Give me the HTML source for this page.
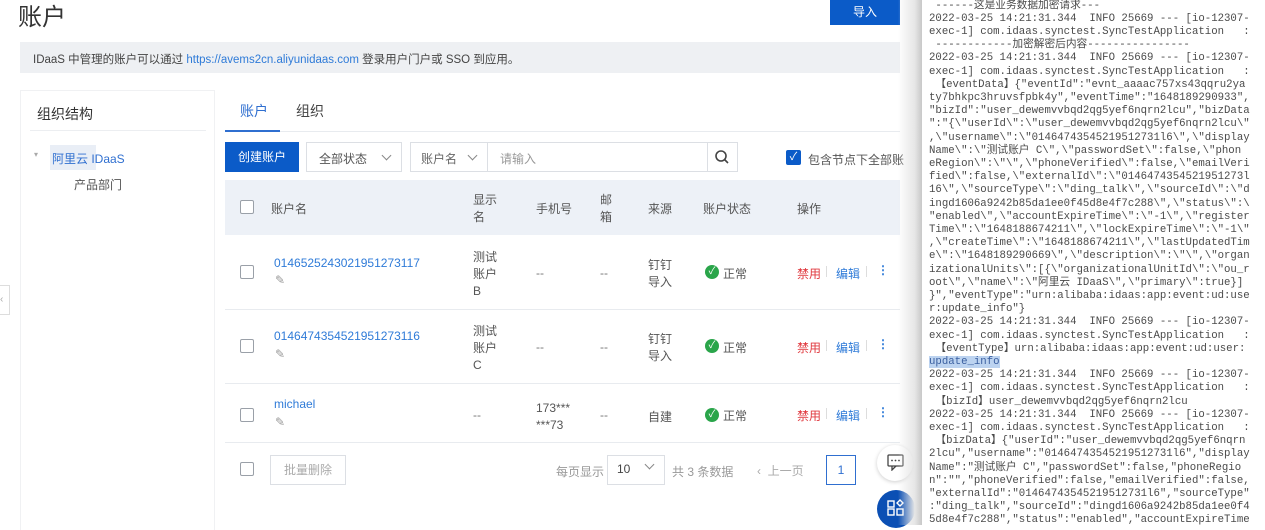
<!DOCTYPE html>
<html><head><meta charset="utf-8"><style>
*{box-sizing:border-box;margin:0;padding:0}
body{width:1265px;height:525px;overflow:hidden;background:#fff;position:relative;font-family:"Liberation Sans","Noto Sans CJK SC",sans-serif;color:#333;font-size:12px}
.a{position:absolute;white-space:nowrap}
.blue{color:#2f7bd8}
.cb{position:absolute;width:14px;height:14px;border:1px solid #9aa0a8;border-radius:2px;background:#fff}
.sel{position:absolute;border:1px solid #dcdfe4;background:#fff;height:30px}
.chev{position:absolute;width:7px;height:7px;border-right:1px solid #888;border-bottom:1px solid #888;transform:rotate(45deg)}
.hl{position:absolute;left:225px;width:675px;height:1px;background:#e8ebef}
.ok{position:absolute;width:14px;height:14px;border-radius:50%;background:#2aa54a;color:#fff;font-size:10px;line-height:14px;text-align:center}
#con{position:absolute;left:922px;top:0;width:343px;height:525px;background:#fff;font-family:"Liberation Mono","Noto Sans CJK SC",monospace;font-size:10.7px;line-height:13.2px;color:#4a4a4a;padding:0 0 0 7px;white-space:pre;top:-0.5px}
.hi{background:#bcd3f0;color:#3a5fa0}
</style></head><body>
<div class="a" style="left:18px;top:-3px;font-size:24px;color:#333">账户</div>
<div class="a" style="left:830px;top:0;width:70px;height:25px;background:#0b5bc8;color:#fff;font-size:12px;text-align:center;line-height:25px">导入</div>
<div class="a" style="left:20px;top:42px;width:880px;height:31px;background:#eef0f3"></div>
<div class="a" style="left:33px;top:51px;font-size:11.5px;color:#444">IDaaS 中管理的账户可以通过 <span class="blue">https://avems2cn.aliyunidaas.com</span> 登录用户门户或 SSO 到应用。</div>
<div class="a" style="left:20px;top:90px;width:195px;height:440px;border:1px solid #f0f1f3;border-bottom:none"></div>
<div class="a" style="left:37px;top:104px;font-size:14px;color:#333">组织结构</div>
<div class="a" style="left:30px;top:130px;width:176px;height:1px;background:#eceef1"></div>
<div class="a" style="left:34px;top:150px;font-size:8px;color:#aaa">▾</div>
<div class="a" style="left:50px;top:145px;width:46px;height:25px;background:#e9eef6"></div>
<div class="a" style="left:52px;top:150px;font-size:12px;color:#2f6fd0">阿里云 IDaaS</div>
<div class="a" style="left:74px;top:176px;font-size:12px;color:#555">产品部门</div>
<div class="a" style="left:0;top:285px;width:10px;height:30px;border:1px solid #ddd;border-left:none;background:#fff;color:#aaa;font-size:10px;line-height:28px">‹</div>

<div class="a" style="left:240px;top:101px;font-size:14px;color:#2f6fd0">账户</div>
<div class="a" style="left:296px;top:101px;font-size:14px;color:#444">组织</div>
<div class="a" style="left:225px;top:131px;width:675px;height:1px;background:#e8ebef"></div>
<div class="a" style="left:225px;top:130px;width:55px;height:2px;background:#2f6fd0"></div>

<div class="a" style="left:225px;top:142px;width:74px;height:30px;background:#0b5bc8;color:#fff;text-align:center;line-height:30px;font-size:12px">创建账户</div>
<div class="sel" style="left:306px;top:142px;width:96px"></div>
<div class="a" style="left:319px;top:150px;color:#555">全部状态</div><div class="chev" style="left:383px;top:152px"></div>
<div class="sel" style="left:410px;top:142px;width:328px"></div>
<div class="a" style="left:487px;top:142px;width:1px;height:30px;background:#dcdfe4"></div>
<div class="a" style="left:707px;top:142px;width:1px;height:30px;background:#dcdfe4"></div>
<div class="a" style="left:421px;top:150px;color:#666">账户名</div><div class="chev" style="left:469px;top:152px"></div>
<div class="a" style="left:500px;top:150px;color:#999">请输入</div>
<svg class="a" style="left:714px;top:149px" width="16" height="16"><circle cx="7" cy="7" r="5" fill="none" stroke="#444" stroke-width="1.6"/><path d="M10.5 10.5l3.5 3.5" stroke="#444" stroke-width="1.6"/></svg>
<div class="a" style="left:786px;top:150px;width:15px;height:15px;background:#0b5bc8;border-radius:2px;color:#fff;font-size:11px;line-height:15px;text-align:center">✓</div>
<div class="a" style="left:808px;top:151px;color:#555">包含节点下全部账</div>

<div class="a" style="left:225px;top:180px;width:675px;height:55px;background:#edf1f7"></div>
<div class="cb" style="left:240px;top:200px"></div>
<div class="a" style="left:271px;top:200px;color:#555">账户名</div>
<div class="a" style="left:473px;top:192px;color:#555;line-height:17px">显示<br>名</div>
<div class="a" style="left:536px;top:200px;color:#555">手机号</div>
<div class="a" style="left:600px;top:192px;color:#555;line-height:17px">邮<br>箱</div>
<div class="a" style="left:648px;top:200px;color:#555">来源</div>
<div class="a" style="left:703px;top:200px;color:#555">账户状态</div>
<div class="a" style="left:797px;top:200px;color:#555">操作</div>

<!-- row1 -->
<div class="cb" style="left:240px;top:265px"></div>
<div class="a blue" style="left:274px;top:256px">01465252430219512731​17</div>
<div class="a" style="left:275px;top:273px;color:#999">✎</div>
<div class="a" style="left:473px;top:249px;line-height:17px;color:#555">测试<br>账户<br>B</div>
<div class="a" style="left:536px;top:266px;color:#777">--</div>
<div class="a" style="left:600px;top:266px;color:#777">--</div>
<div class="a" style="left:648px;top:257px;line-height:17px;color:#555">钉钉<br>导入</div>
<div class="ok" style="left:705px;top:265px">✓</div><div class="a" style="left:723px;top:265px;color:#555">正常</div>
<div class="a" style="left:797px;top:265px;color:#e0383e">禁用</div><div class="a" style="left:826px;top:266px;width:1px;height:11px;background:#ddd"></div>
<div class="a blue" style="left:836px;top:265px">编辑</div><div class="a" style="left:866px;top:266px;width:1px;height:11px;background:#ddd"></div>
<div class="a blue" style="left:877px;top:263px;font-weight:bold">⋮</div>
<div class="hl" style="top:309px"></div>
<!-- row2 -->
<div class="cb" style="left:240px;top:339px"></div>
<div class="a blue" style="left:274px;top:329px">01464743545219512731​16</div>
<div class="a" style="left:275px;top:347px;color:#999">✎</div>
<div class="a" style="left:473px;top:323px;line-height:17px;color:#555">测试<br>账户<br>C</div>
<div class="a" style="left:536px;top:340px;color:#777">--</div>
<div class="a" style="left:600px;top:340px;color:#777">--</div>
<div class="a" style="left:648px;top:331px;line-height:17px;color:#555">钉钉<br>导入</div>
<div class="ok" style="left:705px;top:339px">✓</div><div class="a" style="left:723px;top:339px;color:#555">正常</div>
<div class="a" style="left:797px;top:339px;color:#e0383e">禁用</div><div class="a" style="left:826px;top:340px;width:1px;height:11px;background:#ddd"></div>
<div class="a blue" style="left:836px;top:339px">编辑</div><div class="a" style="left:866px;top:340px;width:1px;height:11px;background:#ddd"></div>
<div class="a blue" style="left:877px;top:337px;font-weight:bold">⋮</div>
<div class="hl" style="top:383px"></div>
<!-- row3 -->
<div class="cb" style="left:240px;top:408px"></div>
<div class="a blue" style="left:274px;top:397px">michael</div>
<div class="a" style="left:275px;top:415px;color:#999">✎</div>
<div class="a" style="left:473px;top:408px;color:#777">--</div>
<div class="a" style="left:536px;top:400px;line-height:17px;color:#555">173***<br>***73</div>
<div class="a" style="left:600px;top:408px;color:#777">--</div>
<div class="a" style="left:648px;top:408px;color:#555">自建</div>
<div class="ok" style="left:705px;top:408px">✓</div><div class="a" style="left:723px;top:407px;color:#555">正常</div>
<div class="a" style="left:797px;top:407px;color:#e0383e">禁用</div><div class="a" style="left:826px;top:408px;width:1px;height:11px;background:#ddd"></div>
<div class="a blue" style="left:836px;top:407px">编辑</div><div class="a" style="left:866px;top:408px;width:1px;height:11px;background:#ddd"></div>
<div class="a blue" style="left:877px;top:405px;font-weight:bold">⋮</div>
<div class="hl" style="top:442px"></div>
<!-- footer -->
<div class="cb" style="left:240px;top:462px"></div>
<div class="a" style="left:270px;top:455px;width:76px;height:30px;border:1px solid #dcdfe4;color:#aaa;text-align:center;line-height:28px">批量删除</div>
<div class="a" style="left:556px;top:463px;color:#999">每页显示</div>
<div class="sel" style="left:607px;top:455px;width:58px"></div>
<div class="a" style="left:617px;top:462px;color:#444">10</div><div class="chev" style="left:646px;top:461px"></div>
<div class="a" style="left:672px;top:463px;color:#999">共 3 条数据</div>
<div class="a" style="left:757px;top:462px;color:#aaa">‹ &nbsp;上一页</div>
<div class="a" style="left:826px;top:455px;width:30px;height:30px;border:1px solid #2f6fd0;color:#2f6fd0;text-align:center;line-height:28px">1</div>
<div class="a" style="left:877px;top:445px;width:36px;height:36px;border-radius:50%;background:#fff;box-shadow:0 1px 4px rgba(0,0,0,.2)"></div>
<svg class="a" style="left:887px;top:454px" width="17" height="17"><rect x="1" y="1" width="15" height="11" rx="1" fill="none" stroke="#444" stroke-width="1.3"/><path d="M5 12v4l4-4" fill="none" stroke="#444" stroke-width="1.3"/><circle cx="5" cy="6.5" r=".9" fill="#444"/><circle cx="8.5" cy="6.5" r=".9" fill="#444"/><circle cx="12" cy="6.5" r=".9" fill="#444"/></svg>
<div class="a" style="left:877px;top:490px;width:38px;height:38px;border-radius:50%;background:#0b4fb4"></div>
<svg class="a" style="left:887px;top:499px" width="18" height="18"><rect x="1" y="2" width="6" height="6" fill="none" stroke="#fff" stroke-width="1.4"/><rect x="1" y="10" width="6" height="6" fill="none" stroke="#fff" stroke-width="1.4"/><rect x="10" y="10" width="6" height="6" fill="none" stroke="#fff" stroke-width="1.4"/><path d="M13 1l3 3-3 3-3-3z" fill="none" stroke="#fff" stroke-width="1.4"/></svg>

<div class="a" style="left:898px;top:0;width:24px;height:525px;background:linear-gradient(to right,rgba(255,255,255,0),#e6e6e6 70%,#c8c8c8)"></div>
<div id="con"> ------这是业务数据加密请求---
2022-03-25 14:21:31.344  INFO 25669 --- [io-12307-
exec-1] com.idaas.synctest.SyncTestApplication   :
 ------------加密解密后内容----------------
2022-03-25 14:21:31.344  INFO 25669 --- [io-12307-
exec-1] com.idaas.synctest.SyncTestApplication   :
 【eventData】{"eventId":"evnt_aaaac757xs43qqru2ya
ty7bhkpc3hruvsfpbk4y","eventTime":"1648189290933",
"bizId":"user_dewemvvbqd2qg5yef6nqrn2lcu","bizData
":"{\"userId\":\"user_dewemvvbqd2qg5yef6nqrn2lcu\"
,\"username\":\"01464743545219512731l6\",\"display
Name\":\"测试账户 C\",\"passwordSet\":false,\"phon
eRegion\":\"\",\"phoneVerified\":false,\"emailVeri
fied\":false,\"externalId\":\"0146474354521951273l
16\",\"sourceType\":\"ding_talk\",\"sourceId\":\"d
ingd1606a9242b85da1ee0f45d8e4f7c288\",\"status\":\
"enabled\",\"accountExpireTime\":\"-1\",\"register
Time\":\"1648188674211\",\"lockExpireTime\":\"-1\"
,\"createTime\":\"1648188674211\",\"lastUpdatedTim
e\":\"1648189290669\",\"description\":\"\",\"organ
izationalUnits\":[{\"organizationalUnitId\":\"ou_r
oot\",\"name\":\"阿里云 IDaaS\",\"primary\":true}]
}","eventType":"urn:alibaba:idaas:app:event:ud:use
r:update_info"}
2022-03-25 14:21:31.344  INFO 25669 --- [io-12307-
exec-1] com.idaas.synctest.SyncTestApplication   :
 【eventType】urn:alibaba:idaas:app:event:ud:user:
<span class="hi">update_info</span>
2022-03-25 14:21:31.344  INFO 25669 --- [io-12307-
exec-1] com.idaas.synctest.SyncTestApplication   :
 【bizId】user_dewemvvbqd2qg5yef6nqrn2lcu
2022-03-25 14:21:31.344  INFO 25669 --- [io-12307-
exec-1] com.idaas.synctest.SyncTestApplication   :
 【bizData】{"userId":"user_dewemvvbqd2qg5yef6nqrn
2lcu","username":"01464743545219512731l6","display
Name":"测试账户 C","passwordSet":false,"phoneRegio
n":"","phoneVerified":false,"emailVerified":false,
"externalId":"01464743545219512731l6","sourceType"
:"ding_talk","sourceId":"dingd1606a9242b85da1ee0f4
5d8e4f7c288","status":"enabled","accountExpireTime</div>
</body></html>
